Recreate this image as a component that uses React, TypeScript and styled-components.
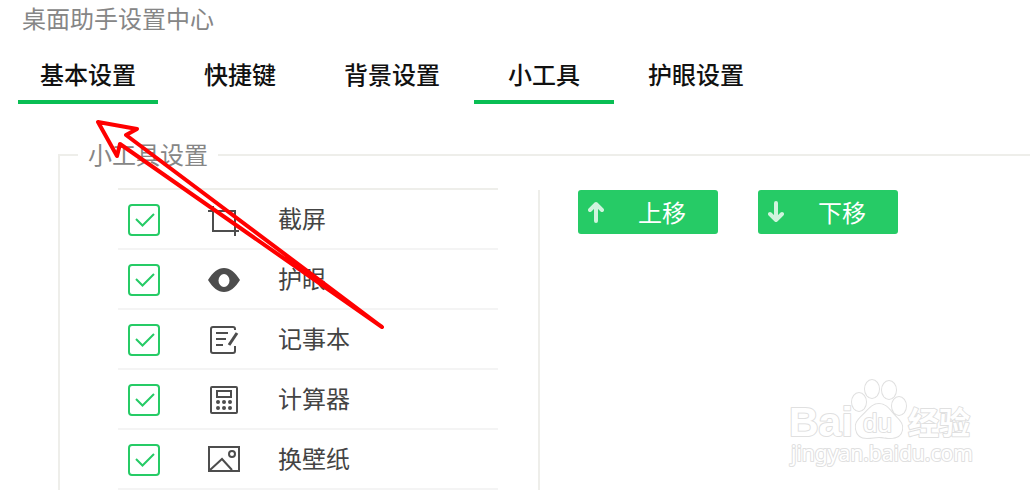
import React, { useState } from "react";
import styled, { createGlobalStyle } from "styled-components";

const GlobalStyle = createGlobalStyle`
  *, *::before, *::after { box-sizing: border-box; }
  body {
    margin: 0;
    overflow: hidden;
    background: #fff;
    font-family: "Noto Sans CJK SC", "Liberation Sans", sans-serif;
    font-size: 24px;
  }
  button, input { font: inherit; }
`;

const Page = styled.main`
  position: relative;
  display: flex;
  flex-direction: column;
  min-height: 100vh;
`;

const Title = styled.h1`
  margin: 0;
  padding: 4px 22px 0;
  font-size: 24px;
  font-weight: 400;
  line-height: 28px;
  color: #868686;
`;

const TabBar = styled.nav`
  display: flex;
  gap: 12px;
  padding: 20px 18px 0;
`;

const Tab = styled.button<{ $underlined: boolean }>`
  width: 140px;
  height: 52px;
  padding: 0 0 4px;
  border: 0;
  border-bottom: 4px solid ${(p) => (p.$underlined ? "#09be54" : "transparent")};
  background: none;
  color: #111;
  font-weight: 500;
  line-height: 44px;
  cursor: pointer;
`;

const Group = styled.fieldset`
  flex: 1;
  min-width: 0;
  margin: 36px 0 0 58px;
  padding: 0 0 0 18px;
  border: 2px solid #eeeeea;
  border-right: 0;
  border-bottom: 0;
`;

const GroupTitle = styled.legend`
  padding: 0 10px 2px;
  line-height: 28px;
  color: #868686;
`;

const GroupBody = styled.div`
  display: flex;
  height: 100%;
  padding: 18px 0 0 40px;
`;

const ToolList = styled.ul`
  flex: 0 0 380px;
  margin: 0;
  padding: 0;
  list-style: none;
  border-top: 2px solid #eeeeea;
`;

const ToolItem = styled.li`
  border-bottom: 2px solid #f4f4f4;
`;

const ToolLabel = styled.label`
  display: grid;
  grid-template-columns: 80px 70px 1fr;
  align-items: center;
  height: 58px;
  padding: 2px 0 0 10px;
  color: #444;
  cursor: pointer;
`;

const ToolName = styled.span`
  padding-bottom: 6px;
`;

const CheckCell = styled.span`
  display: grid;
  width: 32px;
  height: 32px;

  > * { grid-area: 1 / 1; }
  > svg { pointer-events: none; }
  > input:not(:checked) + svg { visibility: hidden; }
`;

const Checkbox = styled.input`
  appearance: none;
  width: 32px;
  height: 32px;
  margin: 0;
  border: 2px solid #26cb66;
  border-radius: 4px;
  background: #fff;
`;

const Actions = styled.div`
  display: flex;
  flex: 1;
  align-items: flex-start;
  gap: 40px;
  margin: 2px 0 0 40px;
  padding-left: 38px;
  border-left: 2px solid #eeeeea;
`;

const MoveButton = styled.button`
  display: flex;
  align-items: center;
  gap: 34px;
  width: 140px;
  height: 44px;
  padding: 0 10px;
  border: 0;
  border-radius: 3px;
  background: #26cb66;
  color: #fff;
  line-height: 44px;
  cursor: pointer;
`;

const Pointer = styled.svg`
  position: absolute;
  top: 112px;
  left: 88px;
  pointer-events: none;
`;

const Watermark = styled.svg`
  position: absolute;
  right: 50px;
  bottom: 16px;
  pointer-events: none;
`;

const Icon = ({ children }: { children: React.ReactNode }) => (
  <svg width="32" height="32" viewBox="0 0 32 32" fill="none" stroke="#4d4d4d" strokeWidth="2" aria-hidden="true">
    {children}
  </svg>
);

const icons = {
  crop: (
    <Icon>
      <path d="M0 7H27V32M5 2V27H31" />
    </Icon>
  ),
  eye: (
    <Icon>
      <path
        d="M0 16C5 8 10 4 16 4S27 8 32 16C27 24 22 28 16 28S5 24 0 16ZM16 10A5.500 6.500 0 0 0 16 23A5.500 6.500 0 0 0 16 10Z"
        fill="#4d4d4d"
        fillRule="evenodd"
        stroke="none"
      />
    </Icon>
  ),
  note: (
    <Icon>
      <path d="M27 6V5Q27 3 25 3H5Q3 3 3 5V27Q3 29 5 29H25Q27 29 27 27V22" />
      <path d="M8 9H20M8 15H18M8 21H15" />
      <path d="M29 9L21 21" strokeWidth="3" />
    </Icon>
  ),
  calculator: (
    <Icon>
      <rect x="3" y="3" width="26" height="26" rx="1" />
      <rect x="9" y="7" width="14" height="6" />
      <path d="M10 18H10.01M16 18H16.01M22 18H22.01M10 24H10.01M16 24H16.01M22 24H22.01" strokeWidth="4" strokeLinecap="round" />
    </Icon>
  ),
  picture: (
    <Icon>
      <rect x="1" y="3" width="30" height="24" />
      <circle cx="24" cy="10" r="3" />
      <path d="M2 26L14 15L24 26" />
    </Icon>
  ),
};

const tabs = [
  { name: "基本设置", underlined: true },
  { name: "快捷键", underlined: false },
  { name: "背景设置", underlined: false },
  { name: "小工具", underlined: true },
  { name: "护眼设置", underlined: false },
];

const tools = [
  { name: "截屏", icon: icons.crop },
  { name: "护眼", icon: icons.eye },
  { name: "记事本", icon: icons.note },
  { name: "计算器", icon: icons.calculator },
  { name: "换壁纸", icon: icons.picture },
];

const ToolRow = ({ name, icon }: { name: string; icon: React.ReactNode }) => {
  const [checked, setChecked] = useState(true);
  return (
    <ToolItem>
      <ToolLabel>
        <CheckCell>
          <Checkbox type="checkbox" checked={checked} onChange={(e) => setChecked(e.target.checked)} />
          <svg width="32" height="32" viewBox="0 0 32 32" fill="none" stroke="#26cb66" strokeWidth="2" aria-hidden="true">
            <path d="M8 15L14.500 21.500L26 10" />
          </svg>
        </CheckCell>
        {icon}
        <ToolName>{name}</ToolName>
      </ToolLabel>
    </ToolItem>
  );
};

const MoveIcon = ({ d }: { d: string }) => (
  <svg
    width="16"
    height="24"
    viewBox="0 0 16 24"
    fill="none"
    stroke="#d0f4de"
    strokeWidth="4"
    strokeLinecap="round"
    strokeLinejoin="round"
    aria-hidden="true"
  >
    <path d={d} />
  </svg>
);

export default function App() {
  return (
    <Page>
      <GlobalStyle />
      <Title>桌面助手设置中心</Title>
      <TabBar>
        {tabs.map((t) => (
          <Tab key={t.name} type="button" $underlined={t.underlined}>
            {t.name}
          </Tab>
        ))}
      </TabBar>
      <Group>
        <GroupTitle>小工具设置</GroupTitle>
        <GroupBody>
          <ToolList>
            {tools.map((t) => (
              <ToolRow key={t.name} name={t.name} icon={t.icon} />
            ))}
          </ToolList>
          <Actions>
            <MoveButton type="button">
              <MoveIcon d="M8 21V4M2 10L8 4L14 10" />
              上移
            </MoveButton>
            <MoveButton type="button">
              <MoveIcon d="M8 3V20M2 14L8 20L14 14" />
              下移
            </MoveButton>
          </Actions>
        </GroupBody>
      </Group>
      <Pointer width="300" height="222" viewBox="88 112 300 222" fill="none" aria-hidden="true">
        <path
          d="M98 122L137 129L126 135L382 327L120 144L117 156Z"
          stroke="#f00"
          strokeWidth="4"
          strokeLinejoin="round"
        />
      </Pointer>
      <Watermark width="192" height="98" viewBox="788 376 192 98" fill="#fff" stroke="#e0e0e0" strokeWidth="2" strokeLinejoin="round" paintOrder="stroke">
        <text x="789" y="436" fontFamily="Liberation Sans" fontWeight="700" fontSize="41">Bai</text>
        <ellipse cx="859" cy="402" rx="7" ry="9" />
        <ellipse cx="872" cy="389" rx="7" ry="9" />
        <ellipse cx="889" cy="390" rx="7" ry="9" />
        <ellipse cx="899" cy="406" rx="7" ry="9" />
        <path d="M879 404C887 404 890 411 896 417C901 422 903 425 902 430C901 436 896 438 890 438C885 438 883 437 879 437C875 437 872 438 867 438C861 438 857 435 856 429C855 424 857 421 862 416C868 411 871 404 879 404Z" />
        <text x="863" y="432" fontFamily="Liberation Sans" fontSize="26">du</text>
        <text x="908" y="434" fontFamily="Noto Sans CJK SC" fontWeight="700" fontSize="31">经验</text>
        <text x="791" y="461" fontFamily="Noto Sans" fontSize="21">jingyan.baidu.com</text>
      </Watermark>
    </Page>
  );
}
